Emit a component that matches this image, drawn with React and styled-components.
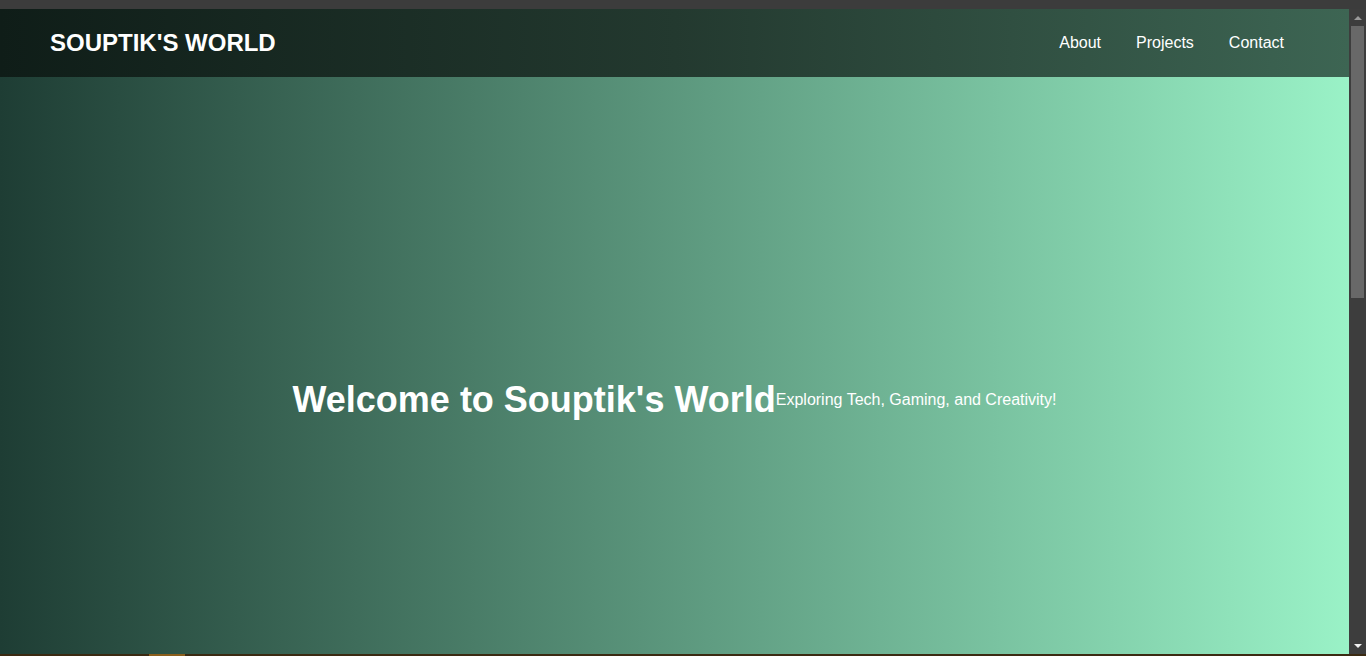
import styled, { createGlobalStyle } from "styled-components";

const Global = createGlobalStyle`
  html, body {
    margin: 0;
    padding: 0;
    overflow: hidden;
    background: #3c3c3c;
    font-family: "Liberation Sans", Arial, sans-serif;
  }
`;

const links = ["About", "Projects", "Contact"];

export default function App() {
  return (
    <Screen>
      <Global />
      <TopStrip />
      <Viewport>
        <Page>
          <Header>
            <Logo>SOUPTIK'S WORLD</Logo>
            <Nav>
              {links.map((l) => (
                <NavLink key={l} href={"#" + l.toLowerCase()}>
                  {l}
                </NavLink>
              ))}
            </Nav>
          </Header>
          <Hero>
            <Title>Welcome to Souptik's World</Title>
            <Tagline>Exploring Tech, Gaming, and Creativity!</Tagline>
          </Hero>
        </Page>
        <Scrollbar>
          <Arrow $dir="up" />
          <Thumb />
          <Spacer />
          <Arrow $dir="down" />
        </Scrollbar>
      </Viewport>
      <BottomStrip>
        <Tab />
      </BottomStrip>
    </Screen>
  );
}

const Screen = styled.div`
  height: 656px;
  display: flex;
  flex-direction: column;
  overflow: hidden;
`;

const TopStrip = styled.div`
  height: 9px;
  flex-shrink: 0;
  background: #3c3c3c;
`;

const Viewport = styled.div`
  flex: 1;
  min-height: 0;
  display: flex;
`;

const Page = styled.div`
  flex: 1;
  overflow: hidden;
  display: flex;
  flex-direction: column;
`;

const Header = styled.header`
  height: 68px;
  flex-shrink: 0;
  display: flex;
  align-items: center;
  justify-content: space-between;
  padding: 0 65px 0 50px;
  background: linear-gradient(90deg, #0f1d18, #23392f 50%, #3d6553);
`;

const Logo = styled.div`
  color: #fff;
  font-size: 24px;
  font-weight: 700;
`;

const Nav = styled.nav`
  display: flex;
  gap: 35px;
`;

const NavLink = styled.a`
  color: #fff;
  font-size: 16px;
  text-decoration: none;
`;

const Hero = styled.section`
  height: 645px;
  flex-shrink: 0;
  display: flex;
  justify-content: center;
  align-items: center;
  color: #fff;
  background: linear-gradient(90deg, #1e3d34, #9af2c7);
`;

const Title = styled.h1`
  margin: 0;
  font-size: 36px;
  font-weight: 700;
`;

const Tagline = styled.p`
  margin: 0;
  font-size: 16px;
`;

const Scrollbar = styled.div`
  width: 17px;
  flex-shrink: 0;
  background: #3d3d3d;
  display: flex;
  flex-direction: column;
  align-items: center;
`;

const Arrow = styled.div`
  height: 17px;
  width: 17px;
  flex-shrink: 0;
  display: flex;
  align-items: center;
  justify-content: center;
  &::after {
    content: "";
    border-left: 4px solid transparent;
    border-right: 4px solid transparent;
    ${(p) =>
      p.$dir === "up"
        ? "border-bottom: 4px solid #9a9a9a;"
        : "border-top: 4px solid #f0f0f0;"}
  }
`;

const Thumb = styled.div`
  width: 13px;
  height: 272px;
  background: #686868;
`;

const Spacer = styled.div`
  flex: 1;
`;

const BottomStrip = styled.div`
  height: 2px;
  flex-shrink: 0;
  background: #3b2a12;
  display: flex;
`;

const Tab = styled.div`
  margin-left: 149px;
  width: 36px;
  background: #8b5e1c;
`;
